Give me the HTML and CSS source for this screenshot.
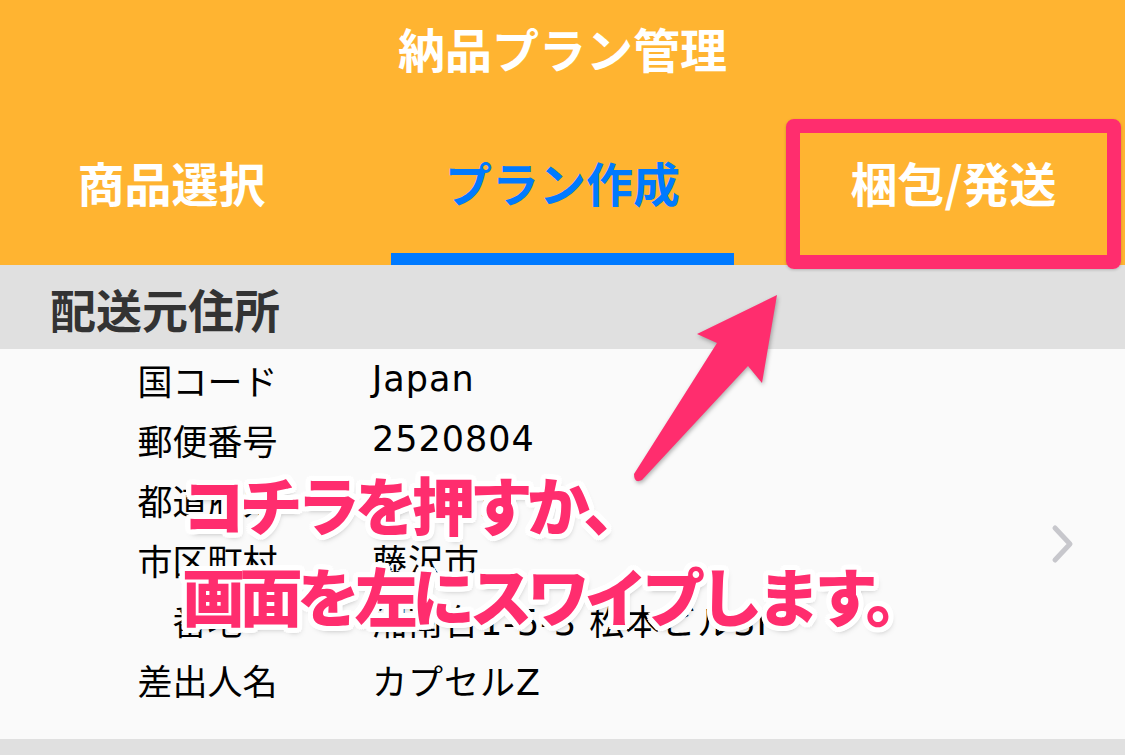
FILE: index.html
```html
<!DOCTYPE html>
<html lang="ja">
<head>
    <meta charset="UTF-8">
    <meta name="viewport" content="width=device-width, initial-scale=1.0">
    <title>納品プラン管理</title>
    <link rel="stylesheet" href="styles.css">
</head>
<body>
    <div class="screen">
        <header class="app-header">
            <h1 class="app-title">納品プラン管理</h1>
            <nav class="tabs">
                <div class="tab">商品選択</div>
                <div class="tab active">プラン作成</div>
                <div class="tab">梱包/発送</div>
            </nav>
        </header>

        <section class="address">
            <h2 class="section-title">配送元住所</h2>
            <div class="address-body">
                <div class="rows">
                    <div class="row"><span class="label">国コード</span><span class="value">Japan</span></div>
                    <div class="row"><span class="label">郵便番号</span><span class="value">2520804</span></div>
                    <div class="row"><span class="label">都道府県</span><span class="value">神奈川県</span></div>
                    <div class="row"><span class="label">市区町村</span><span class="value">藤沢市</span></div>
                    <div class="row"><span class="label">番地</span><span class="value">湘南台1-5-3 松本ビル3F</span></div>
                    <div class="row"><span class="label">差出人名</span><span class="value">カプセルZ</span></div>
                </div>
                <svg class="chevron" width="24" height="40" viewBox="0 0 24 40">
                    <polyline points="4,4 19,20 4,36" fill="none" stroke="#c7c7cc" stroke-width="5" stroke-linecap="round" stroke-linejoin="round"/>
                </svg>
            </div>
        </section>
        <div class="footer-strip"></div>

        <!-- annotation layer -->
        <div class="highlight-box"></div>
        <svg class="arrow" width="1125" height="755" viewBox="0 0 1125 755">
            <path d="M634,474 L717,343 L697,334 L777,295 L762,383 L748,366 L642,480 Q634,484 634,474 Z" fill="#ff2d6e"/>
        </svg>
        <div class="callout">
            <p>コチラを押すか、</p>
            <p>画面を左にスワイプします。</p>
        </div>
    </div>
</body>
</html>
```

FILE: styles.css
```css
body {
    margin: 0;
    font-family: "Noto Sans CJK JP", sans-serif;
    background-color: #fafafa;
}
.screen {
    position: relative;
    width: 1125px;
    height: 755px;
    overflow: hidden;
}
.app-header {
    background-color: #ffb431;
}
.app-title {
    margin: 0;
    height: 96px;
    line-height: 96px;
    text-align: center;
    color: #fff;
    font-size: 47px;
    font-weight: 700;
}
.tabs {
    display: flex;
    gap: 48px;
    height: 169px;
}
.tab {
    width: 343px;
    box-sizing: border-box;
    padding-top: 56px;
    line-height: 60px;
    text-align: center;
    color: #fff;
    font-size: 47px;
    font-weight: 700;
}
.tab.active {
    color: #007aff;
    border-bottom: 12px solid #007aff;
}
.section-title {
    margin: 0;
    height: 84px;
    line-height: 86px;
    padding-left: 50px;
    background-color: #e0e0e0;
    color: #333;
    font-size: 46px;
    font-weight: 700;
}
.address-body {
    display: flex;
    align-items: center;
    justify-content: space-between;
    padding: 0 50px 30px 137px;
    background-color: #fafafa;
}
.chevron {
    margin-top: 30px;
}
.row {
    display: flex;
    height: 60px;
    align-items: center;
    font-size: 35px;
    color: #000;
}
.label {
    width: 141px;
    margin-right: 94px;
    text-align: center;
}
.value {
    font-family: "DejaVu Sans", "Noto Sans CJK JP", sans-serif;
    letter-spacing: 1px;
}
.footer-strip {
    height: 20px;
    background-color: #e0e0e0;
}
.highlight-box {
    position: absolute;
    left: 786px;
    top: 119px;
    width: 335px;
    height: 150px;
    box-sizing: border-box;
    border: 14px solid #ff2d6e;
    border-radius: 8px;
    box-shadow: 0 1px 3px rgba(0, 0, 0, 0.2);
}
.arrow {
    position: absolute;
    left: 0;
    top: 0;
    filter: drop-shadow(1px 2px 2px rgba(0, 0, 0, 0.3));
}
.callout {
    position: absolute;
    left: 182px;
    top: 457px;
    color: #ff2d6e;
    font-size: 63px;
    font-weight: 900;
    letter-spacing: -5.5px;
    line-height: 91px;
    text-shadow:
        5px 0 0 #fff, -5px 0 0 #fff, 0 5px 0 #fff, 0 -5px 0 #fff,
        4px 4px 0 #fff, -4px 4px 0 #fff, 4px -4px 0 #fff, -4px -4px 0 #fff,
        2px 5px 0 #fff, -2px 5px 0 #fff, 2px -5px 0 #fff, -2px -5px 0 #fff,
        5px 2px 0 #fff, -5px 2px 0 #fff, 5px -2px 0 #fff, -5px -2px 0 #fff,
        2px 4px 6px rgba(0, 0, 0, 0.35);
}
.callout p {
    margin: 0;
}
```
